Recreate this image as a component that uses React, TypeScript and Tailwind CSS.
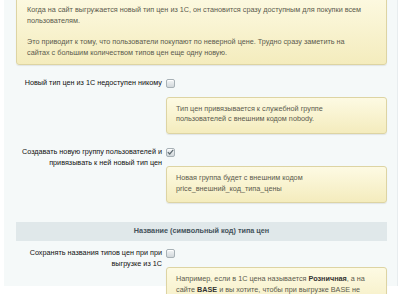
import React from "react";

function Check({ checked }: { checked?: boolean }) {
  return (
    <span className="mt-[1px] flex h-[9px] w-[9px] items-center justify-center rounded-[2px] border border-[#a7b1b6] bg-gradient-to-b from-[#f4f6f7] to-[#d2d8db] shadow-[inset_0_1px_0_#fff]">
      {checked && (
        <svg width="7" height="6" viewBox="0 0 7 6">
          <path d="M0.8 3.1 L2.7 5 L6.2 0.9" fill="none" stroke="#5d6a70" strokeWidth="1.2" />
        </svg>
      )}
    </span>
  );
}

function Hint({ children, className = "" }: { children: React.ReactNode; className?: string }) {
  return (
    <div
      className={
        "rounded-[3px] border border-[#ddd4a3] bg-gradient-to-b from-[#fdfae3] to-[#f4ecbd] text-[#5b5b4e] shadow-[0_1px_1px_rgba(0,0,0,0.08)] " +
        className
      }
    >
      {children}
    </div>
  );
}

function OptionRow({
  label,
  checked,
  hint,
  className = "",
}: {
  label: React.ReactNode;
  checked?: boolean;
  hint: React.ReactNode;
  className?: string;
}) {
  return (
    <div className={"grid grid-cols-[150px_1fr] " + className}>
      <div className="row-span-2 whitespace-nowrap pr-[4px] text-right text-[#111]">{label}</div>
      <div className="h-[19px]">
        <Check checked={checked} />
      </div>
      <Hint className="whitespace-nowrap pl-[9px] pr-[9px] pt-[6px] pb-[8px]">{hint}</Hint>
    </div>
  );
}

export default function App() {
  return (
    <div
      className="h-[294px] overflow-hidden bg-white pl-[4px] pr-[5px] text-[7.25px] leading-[10.8px]"
      style={{ fontFamily: '"Liberation Sans", Arial, sans-serif' }}
    >
      <div className="h-full border-r border-[#e8edef] bg-[#f5f9f9] pl-[12px] pr-[10px]">
        <Hint className="-mt-[8px] whitespace-nowrap pl-[10px] pr-[10px] pt-[12px] pb-[5px]">
          <p>
            Когда на сайт выгружается новый тип цен из 1С, он становится сразу доступным для покупки всем
            <br />
            пользователям.
          </p>
          <p className="mt-[10.8px]">
            Это приводит к тому, что пользователи покупают по неверной цене. Трудно сразу заметить на
            <br />
            сайтах с большим количеством типов цен еще одну новую.
          </p>
        </Hint>

        <OptionRow
          className="mt-[12.6px]"
          label="Новый тип цен из 1С недоступен никому"
          hint={
            <>
              Тип цен привязывается к служебной группе
              <br />
              пользователей с внешним кодом nobody.
            </>
          }
        />

        <OptionRow
          className="mt-[12.6px]"
          checked
          label={
            <>
              Создавать новую группу пользователей и
              <br />
              привязывать к ней новый тип цен
            </>
          }
          hint={
            <>
              Новая группа будет с внешним кодом
              <br />
              price_внешний_код_типа_цены
            </>
          }
        />

        <div className="mt-[19px] flex h-[19px] items-center justify-center bg-[#e0e8ea] font-bold text-[#44525a]">
          Название (символьный код) типа цен
        </div>

        <OptionRow
          className="mt-[6.6px]"
          label={
            <>
              Сохранять названия типов цен при при
              <br />
              выгрузке из 1С
            </>
          }
          hint={
            <>
              Например, если в 1С цена называется <b className="text-[#333]">Розничная</b>, а на
              <br />
              сайте <b className="text-[#333]">BASE</b> и вы хотите, чтобы при выгрузке BASE не
              <br />
              изменялась на Розничная, включите эту опцию.
            </>
          }
        />
      </div>
    </div>
  );
}
